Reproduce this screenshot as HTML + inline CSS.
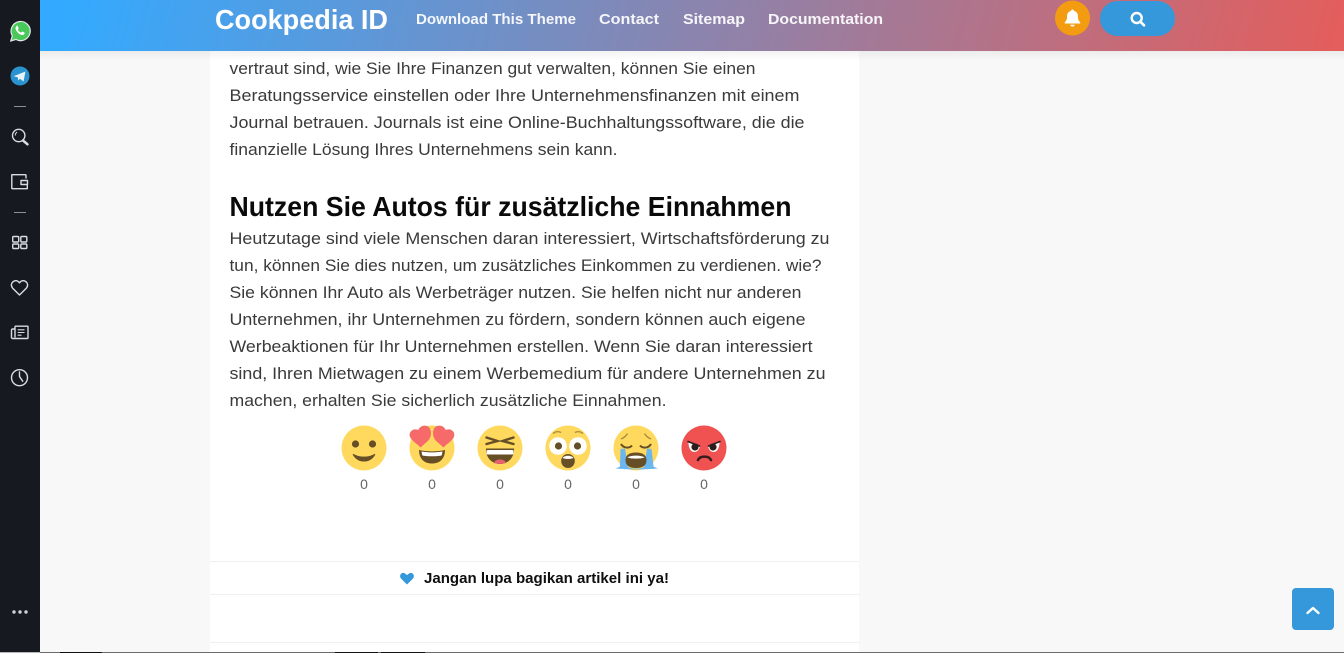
<!DOCTYPE html>
<html lang="de"><head><meta charset="utf-8"><title>Cookpedia ID</title>
<style>
html,body{margin:0;padding:0;width:1344px;height:656px;overflow:hidden;background:#fff}
svg{display:block}
text{font-family:"Liberation Sans",sans-serif}
.b{font-size:17px;fill:#3a3a3a}
.n{font-size:15px;font-weight:700;fill:#fff;opacity:.93}
</style></head><body>
<svg width="1344" height="656" viewBox="0 0 1344 656" xmlns="http://www.w3.org/2000/svg">
<defs>
<linearGradient id="hg" gradientUnits="userSpaceOnUse" x1="100" y1="-130" x2="1300" y2="180"><stop offset="0" stop-color="#33aaff"/><stop offset="1" stop-color="#e35e5c"/></linearGradient>
<linearGradient id="sh" x1="0" y1="0" x2="0" y2="1"><stop offset="0" stop-color="#000" stop-opacity=".05"/><stop offset="1" stop-color="#000" stop-opacity="0"/></linearGradient>
</defs>
<rect width="1344" height="656" fill="#fff"/>
<rect x="40" y="0" width="1304" height="652" fill="#f8f8f8"/>
<rect x="210" y="0" width="649" height="652" fill="#fff"/>
<rect x="40" y="51" width="1304" height="10" fill="url(#sh)"/>
<rect x="40" y="0" width="1304" height="51" fill="url(#hg)"/>

<text x="215" y="29" font-size="28" font-weight="700" fill="#fff" textLength="173" lengthAdjust="spacingAndGlyphs">Cookpedia ID</text>
<text class="n" x="416" y="24" textLength="160" lengthAdjust="spacingAndGlyphs">Download This Theme</text>
<text class="n" x="599" y="24" textLength="60" lengthAdjust="spacingAndGlyphs">Contact</text>
<text class="n" x="683" y="24" textLength="62" lengthAdjust="spacingAndGlyphs">Sitemap</text>
<text class="n" x="768" y="24" textLength="115" lengthAdjust="spacingAndGlyphs">Documentation</text>

<circle cx="1072.500" cy="18" r="17.500" fill="#f39c12"/>
<path d="M1072.500 9.500c.9 0 1.400.6 1.500 1.400 2.800.7 3.900 2.800 3.900 5.200 0 3 .7 4.600 2.300 6.300.4.500.1 1.100-.5 1.100h-14.400c-.6 0-.9-.6-.5-1.100 1.600-1.700 2.300-3.300 2.300-6.300 0-2.400 1.100-4.500 3.900-5.200.1-.8.600-1.400 1.500-1.400zM1070.300 24.800h4.400c0 1.100-1 1.800-2.200 1.800s-2.200-.7-2.200-1.800z" fill="#fff"/>
<rect x="1100" y="1" width="75" height="35" rx="17.500" fill="#3498db"/>
<circle cx="1136.700" cy="18" r="5" fill="none" stroke="#fff" stroke-width="2.400"/>
<path d="M1140.500 21.800l3.500 3.500" stroke="#fff" stroke-width="2.600" stroke-linecap="round"/>

<!-- sidebar -->
<rect width="40" height="652" fill="#161a20"/>
<path d="M10.800 41l1.500-5.200a9.600 9.600 0 1 1 3.600 3.600z" fill="#49c95a" stroke="#e8e8e8" stroke-width="1.200"/>
<path d="M16.500 26.200c-1 .8-1.200 2-.7 3.300 1 2.500 2.700 4.300 5.100 5.300 1.400.5 2.600.3 3.400-.7.500-.6.500-1.200.3-1.400l-2.100-1.100c-.3-.1-.5 0-.7.200l-.7.900c-1.400-.6-2.600-1.700-3.300-3.100l.7-.8c.2-.3.200-.5.100-.7l-.9-2.100c-.2-.4-.7-.5-1.200-.1z" fill="#fff"/>
<circle cx="20" cy="76" r="9.500" fill="#2a93cf"/>
<path d="M13.500 76.200l12-4.700-2 10-3.600-2.700-1.700 1.700-.5-3.300z" fill="#e8f3fa"/>
<rect x="14" y="106" width="12" height="1" fill="#8a9097"/>
<g fill="none" stroke="#d9dce0" stroke-width="1.400">
<circle cx="18.700" cy="135.500" r="6.200"/>
<path d="M23 140.500l4.500 3.800" stroke-width="2.500" stroke-linecap="round"/>
<path d="M15.300 135.500c0-1.500.7-2.700 1.800-3.300" stroke-width="1"/>
<path d="M26 178.500v-3a.8.8 0 0 0-.8-.8h-13.400v13.500a.5.500 0 0 0 .5.500h15v-4M27.500 180.500h-6.500v4h6.500z" stroke-linejoin="round"/>
</g>
<rect x="14" y="212" width="12" height="1" fill="#8a9097"/>
<g fill="none" stroke="#d9dce0" stroke-width="1.400">
<rect x="12.700" y="236.500" width="6" height="5.500" rx="1"/><rect x="20.800" y="236.500" width="6" height="5.500" rx="1"/>
<rect x="12.700" y="244" width="6" height="4.500" rx="1"/><rect x="20.800" y="244" width="6" height="4.500" rx="1"/>
<path d="M19.500 295l-6.800-6.800c-4.300-4.800 3-10.800 6.800-5.400 3.800-5.400 11.100.6 6.800 5.400z" stroke-linejoin="round"/>
<path d="M15 330v-3.300c0-.3.200-.5.500-.5h12c.3 0 .5.200.5.500v11.300c0 .3-.2.500-.5.500h-15c-.5 0-1-.5-1-1v-7.500c0-.5.500-1 1-1h2.500v8.500"/>
<path d="M17.700 329.800h6.800M17.700 332.500h6.800M17.700 335.200h3.800" stroke-width="1.100"/>
<circle cx="19.500" cy="377.700" r="8"/>
<path d="M19.500 372v4.500l3.200 4.700" stroke-linecap="round"/>
</g>
<circle cx="14" cy="612" r="1.700" fill="#cfd3d8"/><circle cx="20" cy="612" r="1.700" fill="#cfd3d8"/><circle cx="26" cy="612" r="1.700" fill="#cfd3d8"/>

<!-- article -->
<text class="b" x="229.500" y="74" textLength="526" lengthAdjust="spacingAndGlyphs">vertraut sind, wie Sie Ihre Finanzen gut verwalten, können Sie einen</text>
<text class="b" x="229.500" y="101" textLength="570" lengthAdjust="spacingAndGlyphs">Beratungsservice einstellen oder Ihre Unternehmensfinanzen mit einem</text>
<text class="b" x="229.500" y="128" textLength="575" lengthAdjust="spacingAndGlyphs">Journal betrauen. Journals ist eine Online-Buchhaltungssoftware, die die</text>
<text class="b" x="229.500" y="155" textLength="388" lengthAdjust="spacingAndGlyphs">finanzielle Lösung Ihres Unternehmens sein kann.</text>
<text x="229.500" y="216" font-size="28" font-weight="700" fill="#0a0a0a" textLength="562" lengthAdjust="spacingAndGlyphs">Nutzen Sie Autos für zusätzliche Einnahmen</text>
<text class="b" x="229.500" y="244" textLength="600" lengthAdjust="spacingAndGlyphs">Heutzutage sind viele Menschen daran interessiert, Wirtschaftsförderung zu</text>
<text class="b" x="229.500" y="271" textLength="592" lengthAdjust="spacingAndGlyphs">tun, können Sie dies nutzen, um zusätzliches Einkommen zu verdienen. wie?</text>
<text class="b" x="229.500" y="298" textLength="572" lengthAdjust="spacingAndGlyphs">Sie können Ihr Auto als Werbeträger nutzen. Sie helfen nicht nur anderen</text>
<text class="b" x="229.500" y="325" textLength="576" lengthAdjust="spacingAndGlyphs">Unternehmen, ihr Unternehmen zu fördern, sondern können auch eigene</text>
<text class="b" x="229.500" y="352" textLength="583" lengthAdjust="spacingAndGlyphs">Werbeaktionen für Ihr Unternehmen erstellen. Wenn Sie daran interessiert</text>
<text class="b" x="229.500" y="379" textLength="596" lengthAdjust="spacingAndGlyphs">sind, Ihren Mietwagen zu einem Werbemedium für andere Unternehmen zu</text>
<text class="b" x="229.500" y="406" textLength="437" lengthAdjust="spacingAndGlyphs">machen, erhalten Sie sicherlich zusätzliche Einnahmen.</text>

<!-- emoji: smile -->
<circle cx="364" cy="448" r="22.500" fill="#ffd95e"/>
<circle cx="355.500" cy="444" r="3.600" fill="#664e27"/><circle cx="372.500" cy="444" r="3.600" fill="#664e27"/>
<path d="M353.500 454c6 3.500 15 3.500 21 0 .5-.3 1 .2.700.7-2.500 4.500-6.500 6.800-11.200 6.800s-8.700-2.300-11.200-6.800c-.3-.5.200-1 .7-.7z" fill="#664e27"/>
<!-- love -->
<circle cx="432" cy="448" r="22.500" fill="#ffd95e"/>
<path d="M419 450c8 1.800 18 1.800 26 0 0 8.500-5 13.500-13 13.500s-13-5-13-13.500z" fill="#664e27"/>
<path d="M421.500 451.500c7 1.200 14 1.200 21 0l-.8 4c-6 1-13.500 1-19.400 0z" fill="#fff"/>
<path d="M420.500 447.500c-3-3.500-8-6-10.200-10-2.500-5 2.500-10 8-7.500 2-5.500 10.500-6.300 12.300 0 1.400 5-1 9.500-2.800 11z" fill="#f76a6a"/>
<path d="M443.500 447.500c3-3.500 8-6 10.200-10 2.500-5-2.500-10-8-7.500-2-5.500-10.500-6.300-12.300 0-1.400 5 1 9.500 2.800 11z" fill="#f76a6a"/>
<!-- laugh -->
<circle cx="500" cy="448" r="22.500" fill="#ffd95e"/>
<path d="M486 448.500h28c.5 9-6 15.500-14 15.500s-14.500-6.500-14-15.500z" fill="#664e27"/>
<rect x="486.500" y="450" width="27" height="4.500" rx="1" fill="#fff"/>
<path d="M494 463c.8-2.500 3-3.500 6-3.500s5.200 1 6 3.500c-3 1.200-9 1.200-12 0z" fill="#e8626d"/>
<path d="M486.500 437.500l11 3.500-11 3M513.500 437.500l-11 3.500 11 3" fill="none" stroke="#664e27" stroke-width="2.400" stroke-linecap="round"/>
<!-- wow -->
<circle cx="568" cy="448" r="22.500" fill="#ffd95e"/>
<circle cx="558" cy="446" r="8.800" fill="#fff"/><circle cx="578" cy="446" r="8.800" fill="#fff"/>
<circle cx="558.500" cy="446" r="3.600" fill="#664e27"/><circle cx="577.500" cy="446" r="3.600" fill="#664e27"/>
<path d="M553 433.500c2.500-2 5.500-2.300 8-1M575 432.500c2.500-1.300 5.500-1 8 1" fill="none" stroke="#a88a3a" stroke-width="1.300"/>
<ellipse cx="568" cy="461" rx="6.800" ry="7" fill="#664e27"/>
<path d="M562.500 458c2-3 9-3 11 0-3 1.300-8 1.300-11 0z" fill="#fff"/>
<!-- cry -->
<circle cx="636" cy="448" r="22.500" fill="#ffd95e"/>
<path d="M621 439c2.500-1 5-3 6.500-5.500M651 439c-2.500-1-5-3-6.500-5.500" fill="none" stroke="#a88a3a" stroke-width="1.300"/>
<path d="M621 444c2.500 4.500 8.500 4.500 11 1.500M651 444c-2.500 4.500-8.500 4.500-11 1.500" fill="none" stroke="#664e27" stroke-width="2"/>
<path d="M620.500 449l4.500-.5 3 18.500 4 1.500h8l4-1.500 3-18.500 4.500.5 2 17.500c1.500.8 3 1.400 4.500 2-13 1.200-29 1.200-42.500 0 1.500-.6 3-1.200 4.500-2z" fill="#6ab7ef"/>
<path d="M625.500 460c0-5 4-7.500 10.500-7.500s10.500 2.500 10.500 7.500-3 8-10.500 8-10.500-3-10.500-8z" fill="#664e27"/>
<path d="M627.500 457.500c3-2.500 14-2.500 17 0-4 1.500-13 1.500-17 0z" fill="#fff"/>
<!-- angry -->
<circle cx="704" cy="448" r="22.500" fill="#f05252"/>
<path d="M688.500 442.500c4 0 8 1.500 11.500 4-1 3.500-3 5.500-5.500 5.500-3.500 0-6-3.500-6-9.500zM719.500 442.500c-4 0-8 1.500-11.500 4 1 3.500 3 5.500 5.500 5.500 3.500 0 6-3.500 6-9.500z" fill="#fff"/>
<circle cx="695" cy="447" r="3.600" fill="#2b1d1d"/><circle cx="713" cy="447" r="3.600" fill="#2b1d1d"/>
<path d="M688 441.500l11.500 4.500M720 441.500l-11.500 4.500" stroke="#2b1d1d" stroke-width="1.600" stroke-linecap="round"/>
<path d="M698 460c2-4.500 11-4.500 13 0" fill="none" stroke="#3a1c1c" stroke-width="2.600" stroke-linecap="round"/>

<g font-size="14" fill="#666" text-anchor="middle">
<text x="364" y="489">0</text><text x="432" y="489">0</text><text x="500" y="489">0</text><text x="568" y="489">0</text><text x="636" y="489">0</text><text x="704" y="489">0</text>
</g>

<rect x="210" y="561" width="649" height="1" fill="#f0f0f0"/>
<rect x="210" y="594" width="649" height="1" fill="#f0f0f0"/>
<rect x="210" y="642" width="649" height="1" fill="#f0f0f0"/>
<path d="M407 584.500l-5.800-5.700c-3-3.300.8-7.500 3.700-5.300l2.100 1.500 2.100-1.500c2.900-2.200 6.700 2 3.700 5.300z" fill="#3498db"/>
<text x="424" y="583" font-size="14.500" font-weight="700" fill="#0f0f0f" textLength="245" lengthAdjust="spacingAndGlyphs">Jangan lupa bagikan artikel ini ya!</text>

<rect x="1292" y="588" width="42" height="42" rx="4" fill="#3498db"/>
<path d="M1307.500 613l5.500-5 5.500 5" fill="none" stroke="#fff" stroke-width="2.400" stroke-linecap="round" stroke-linejoin="round"/>

<!-- bottom edge -->
<rect x="0" y="652" width="1344" height="1" fill="#6b6b6b"/>
<rect x="0" y="652" width="40" height="1" fill="#b8b8b8"/>
<rect x="60" y="652" width="42" height="1" fill="#111"/>
<rect x="335" y="652" width="43" height="1" fill="#111"/>
<rect x="381" y="652" width="44" height="1" fill="#111"/>
</svg>
</body></html>
